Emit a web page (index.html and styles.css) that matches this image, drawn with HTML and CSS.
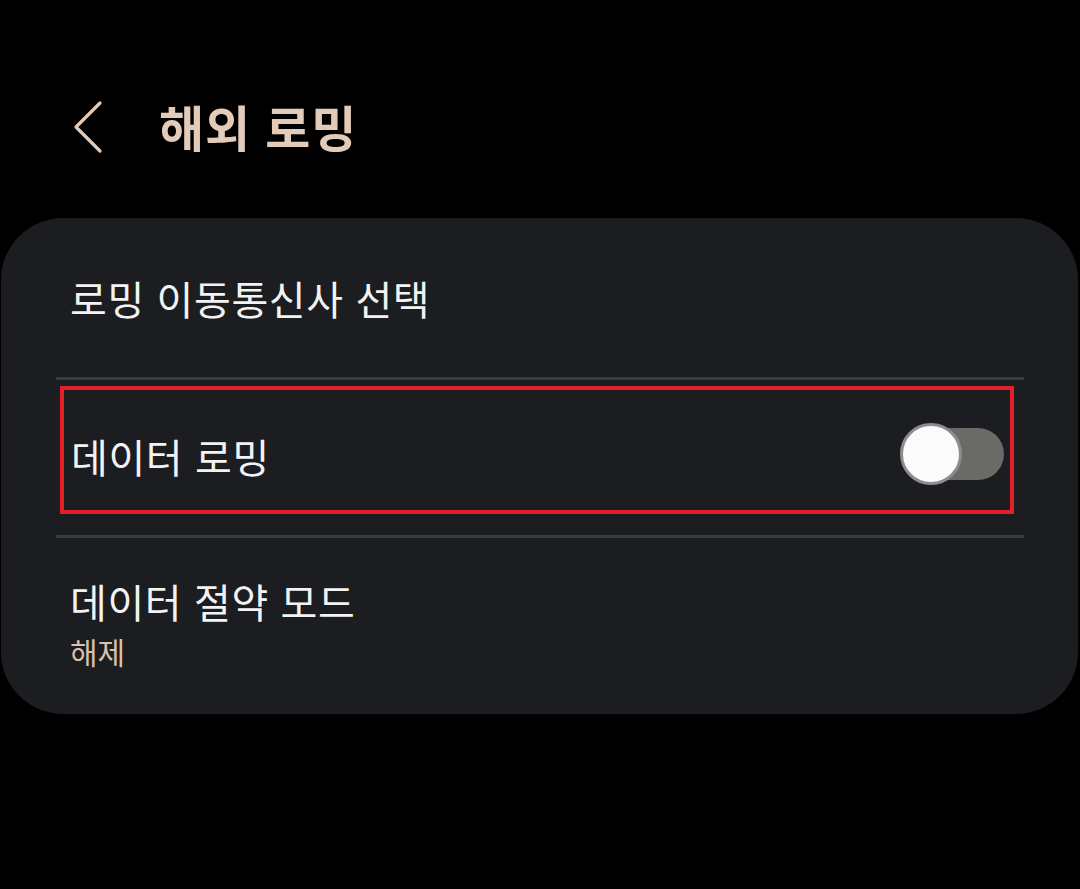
FILE: index.html
```html
<!DOCTYPE html>
<html lang="ko">
<head>
    <meta charset="UTF-8">
    <meta name="viewport" content="width=device-width, initial-scale=1.0">
    <title>해외 로밍</title>
    <link rel="stylesheet" href="styles.css">
</head>
<body>
    <div class="header">
        <svg class="back" width="34" height="54" viewBox="0 0 34 54">
            <path d="M29 3 L5 27 L29 51" fill="none" stroke="#e3cbb9" stroke-width="3.2" stroke-linecap="round" stroke-linejoin="round"/>
        </svg>
        <h1 class="title">해외 로밍</h1>
    </div>
    <!-- 설정 카드 -->
    <div class="card">
        <div class="row first">
            <span class="label">로밍 이동통신사 선택</span>
        </div>
        <div class="divider"></div>
        <div class="mark">
            <div class="row toggleRow">
                <span class="label">데이터 로밍</span>
                <div class="switch">
                    <div class="track"></div>
                    <div class="thumb"></div>
                </div>
            </div>
        </div>
        <div class="divider"></div>
        <div class="row last">
            <span class="label">데이터 절약 모드</span>
            <span class="sub">해제</span>
        </div>
    </div>
</body>
</html>
```
FILE: styles.css
```css
body{margin: 0;background: #000;font-family: "Noto Sans CJK KR", "Noto Sans", sans-serif;color: #f2f2f2;}
.header{display: flex;align-items: flex-start;height: 118px;padding-top: 100px;}
.back{margin-left: 71px;display: block;}
.title{margin: -5px 0 0 54px;font-size: 49px;font-weight: 700;line-height: 62px;color: #e3cbb9;letter-spacing: 0.8px;}
.card{margin: 0 2px 0 1px;background: #1b1d20;border-radius: 62px;padding: 0 54px 0 55px;}
.row{display: flex;padding-left: 14px;}
.first{height: 159px;align-items: center;}
.label{font-size: 40px;line-height: 54px;letter-spacing: 0.6px;}
.divider{height: 3px;background: #393b3e;}
.mark{margin: 6px 10px 21px 4px;border: 4px solid #e31f2a;height: 120px;}
.toggleRow{height: 100%;align-items: center;justify-content: space-between;padding: 12px 6px 0 7px;box-sizing: border-box;}
.switch{position: relative;width: 104px;height: 62px;margin-top: -4px;}
.track{position: absolute;left: 4px;right: 0;top: 5px;height: 52px;border-radius: 26px;background: #6a6b66;}
.thumb{position: absolute;left: 0;top: 0;width: 56px;height: 56px;border-radius: 50%;background: #fbfbfb;border: 3px solid #8d8d8d;}
.last{height: 176px;flex-direction: column;justify-content: center;padding-bottom: 8px;box-sizing: border-box;}
.sub{font-size: 30px;line-height: 40px;color: #dac2af;margin-top: 3px;}
```
